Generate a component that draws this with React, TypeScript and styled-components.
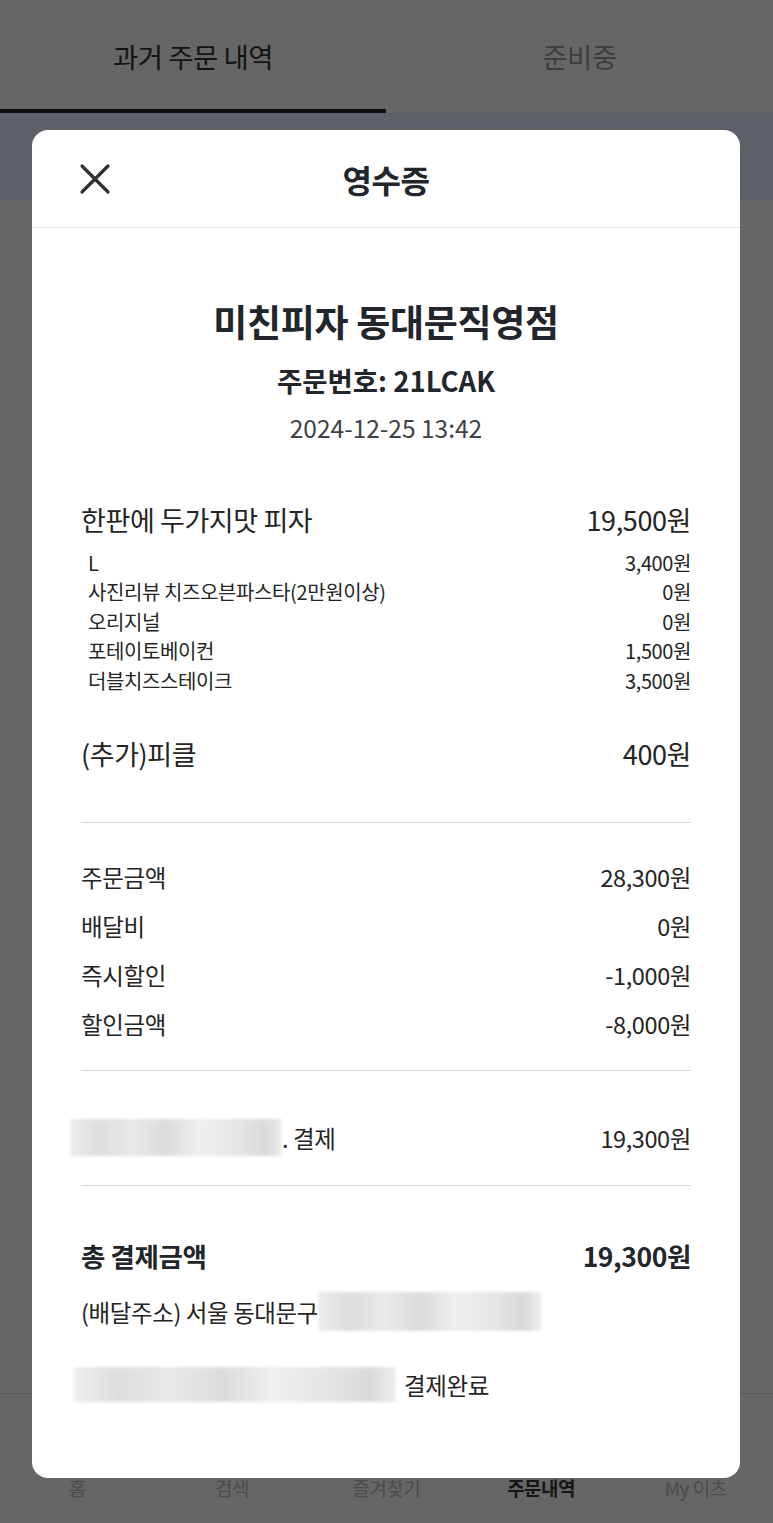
import React from 'react';
import styled, { createGlobalStyle } from 'styled-components';

const GlobalStyle = createGlobalStyle`
  html, body {
    margin: 0;
    padding: 0;
    background: #666666;
  }
  body {
    font-family: 'Noto Sans CJK KR', 'Noto Sans', sans-serif;
    color: #242424;
  }
`;

// 배경 화면 (어둡게 덮인 상태)
const Screen = styled.div`
  position: relative;
  width: 773px;
  height: 1523px;
  display: flex;
  flex-direction: column;
  background: #666666;
  overflow: hidden;
`;

const TabBar = styled.div`
  display: grid;
  grid-template-columns: 386px 1fr;
  height: 113px;
`;

const Tab = styled.div<{ $active?: boolean }>`
  display: flex;
  align-items: center;
  justify-content: center;
  font-size: 27.5px;
  letter-spacing: -0.5px;
  color: ${(p) => (p.$active ? '#141414' : '#3d3d3d')};
  border-bottom: 4px solid ${(p) => (p.$active ? '#0e0e14' : 'transparent')};
  padding-top: 2px;
`;

const Banner = styled.div`
  height: 87px;
  background: #5e6167;
`;

const Content = styled.div`
  flex: 1;
`;

const BottomNav = styled.nav`
  height: 130px;
  border-top: 1px solid #5a5a5a;
  display: grid;
  grid-template-columns: repeat(5, 1fr);
  align-items: end;
  padding-bottom: 22px;
  box-sizing: border-box;
`;

const NavLabel = styled.span<{ $active?: boolean }>`
  text-align: center;
  font-size: 19px;
  letter-spacing: -0.5px;
  color: ${(p) => (p.$active ? '#161616' : '#4b4b4b')};
  font-weight: ${(p) => (p.$active ? 700 : 400)};
`;

// 영수증 모달
const Modal = styled.div`
  position: absolute;
  left: 32px;
  top: 130px;
  width: 708px;
  height: 1348px;
  background: #ffffff;
  border-radius: 16px;
  display: flex;
  flex-direction: column;
  overflow: hidden;
`;

const ModalHeader = styled.header`
  position: relative;
  height: 97px;
  flex-shrink: 0;
  display: flex;
  align-items: center;
  justify-content: center;
  border-bottom: 1px solid #e6e6e6;
`;

const CloseButton = styled.button`
  position: absolute;
  left: 44px;
  top: 30px;
  width: 38px;
  height: 38px;
  padding: 0;
  border: none;
  background: none;
  display: flex;
  align-items: center;
  justify-content: center;
`;

const HeaderTitle = styled.h1`
  margin: 0;
  font-size: 32px;
  font-weight: 700;
  color: #22262a;
  letter-spacing: -0.5px;
`;

const Body = styled.div`
  padding: 0 49px;
  display: flex;
  flex-direction: column;
`;

const StoreName = styled.h2`
  margin: 71px 0 0;
  text-align: center;
  font-size: 37px;
  line-height: 44px;
  font-weight: 700;
  color: #22262a;
  letter-spacing: -0.3px;
`;

const OrderNo = styled.div`
  margin-top: 20px;
  text-align: center;
  font-size: 27.5px;
  line-height: 34px;
  font-weight: 600;
  color: #22262a;
`;

const OrderDate = styled.div`
  margin-top: 16px;
  text-align: center;
  font-size: 24.5px;
  line-height: 30px;
  color: #3f4245;
`;

const Row = styled.div<{ $size: number; $height: number; $bold?: boolean; $indent?: number }>`
  display: flex;
  align-items: center;
  justify-content: space-between;
  font-size: ${(p) => p.$size}px;
  line-height: ${(p) => p.$height}px;
  height: ${(p) => p.$height}px;
  font-weight: ${(p) => (p.$bold ? 700 : 400)};
  color: ${(p) => (p.$bold ? '#22262a' : '#242424')};
  padding-left: ${(p) => p.$indent ?? 0}px;
  letter-spacing: -0.4px;
  white-space: nowrap;
`;

const Options = styled.div`
  margin-top: 10px;
  display: flex;
  flex-direction: column;
`;

const Gap = styled.div<{ $h: number }>`
  height: ${(p) => p.$h}px;
  flex-shrink: 0;
`;

const Divider = styled.hr`
  margin: 0;
  border: none;
  height: 1px;
  background: #d9d9d9;
`;

const Label = styled.span`
  display: flex;
  align-items: center;
`;

// 가려진 개인정보 영역
const Redacted = styled.span<{ $w: number; $h: number; $shift?: number }>`
  display: inline-block;
  width: ${(p) => p.$w}px;
  height: ${(p) => p.$h}px;
  margin-left: ${(p) => p.$shift ?? 0}px;
  background: linear-gradient(
    90deg,
    #eeeeef 0%,
    #dcdddf 14%,
    #e8e9ea 30%,
    #dadbdd 46%,
    #eeefef 62%,
    #e3e4e5 80%,
    #d8d9db 92%,
    #eeeeee 100%
  );
  filter: blur(1.5px);
`;

const Note = styled.span`
  margin-left: 8px;
`;

const options = [
  { name: 'L', price: '3,400원' },
  { name: '사진리뷰 치즈오븐파스타(2만원이상)', price: '0원' },
  { name: '오리지널', price: '0원' },
  { name: '포테이토베이컨', price: '1,500원' },
  { name: '더블치즈스테이크', price: '3,500원' },
];

const summary = [
  { name: '주문금액', price: '28,300원' },
  { name: '배달비', price: '0원' },
  { name: '즉시할인', price: '-1,000원' },
  { name: '할인금액', price: '-8,000원' },
];

const navItems = ['홈', '검색', '즐겨찾기', '주문내역', 'My 이츠'];

const App: React.FC = () => {
  return (
    <>
      <GlobalStyle />
      <Screen>
        <TabBar>
          <Tab $active>과거 주문 내역</Tab>
          <Tab>준비중</Tab>
        </TabBar>
        <Banner />
        <Content />
        <BottomNav>
          {navItems.map((item) => (
            <NavLabel key={item} $active={item === '주문내역'}>
              {item}
            </NavLabel>
          ))}
        </BottomNav>

        <Modal>
          <ModalHeader>
            <CloseButton aria-label="닫기">
              <svg width="32" height="32" viewBox="0 0 32 32" fill="none">
                <path
                  d="M3 3L29 29M29 3L3 29"
                  stroke="#2b3035"
                  strokeWidth="3.2"
                  strokeLinecap="round"
                />
              </svg>
            </CloseButton>
            <HeaderTitle>영수증</HeaderTitle>
          </ModalHeader>

          <Body>
            <StoreName>미친피자 동대문직영점</StoreName>
            <OrderNo>주문번호: 21LCAK</OrderNo>
            <OrderDate>2024-12-25 13:42</OrderDate>

            <Gap $h={59} />
            <Row $size={27} $height={36}>
              <span>한판에 두가지맛 피자</span>
              <span>19,500원</span>
            </Row>
            <Options>
              {options.map((o) => (
                <Row key={o.name} $size={20} $height={29.4} $indent={7}>
                  <span>{o.name}</span>
                  <span>{o.price}</span>
                </Row>
              ))}
            </Options>

            <Gap $h={41} />
            <Row $size={27} $height={36}>
              <span>(추가)피클</span>
              <span>400원</span>
            </Row>

            <Gap $h={50} />
            <Divider />
            <Gap $h={30} />
            {summary.map((s) => (
              <Row key={s.name} $size={23.5} $height={49}>
                <span>{s.name}</span>
                <span>{s.price}</span>
              </Row>
            ))}

            <Gap $h={21} />
            <Divider />
            <Gap $h={47} />
            <Row $size={23.5} $height={40}>
              <Label>
                <Redacted $w={212} $h={37} $shift={-11} />
                <span>. 결제</span>
              </Label>
              <span>19,300원</span>
            </Row>

            <Gap $h={27} />
            <Divider />
            <Gap $h={52} />
            <Row $size={26.5} $height={36} $bold>
              <span>총 결제금액</span>
              <span>19,300원</span>
            </Row>

            <Gap $h={18} />
            <Row $size={23.5} $height={40}>
              <Label>
                <span>(배달주소) 서울 동대문구</span>
                <Redacted $w={223} $h={39} />
              </Label>
            </Row>

            <Gap $h={33} />
            <Row $size={23.5} $height={40}>
              <Label>
                <Redacted $w={322} $h={35} $shift={-7} />
                <Note>결제완료</Note>
              </Label>
            </Row>
          </Body>
        </Modal>
      </Screen>
    </>
  );
};

export default App;
